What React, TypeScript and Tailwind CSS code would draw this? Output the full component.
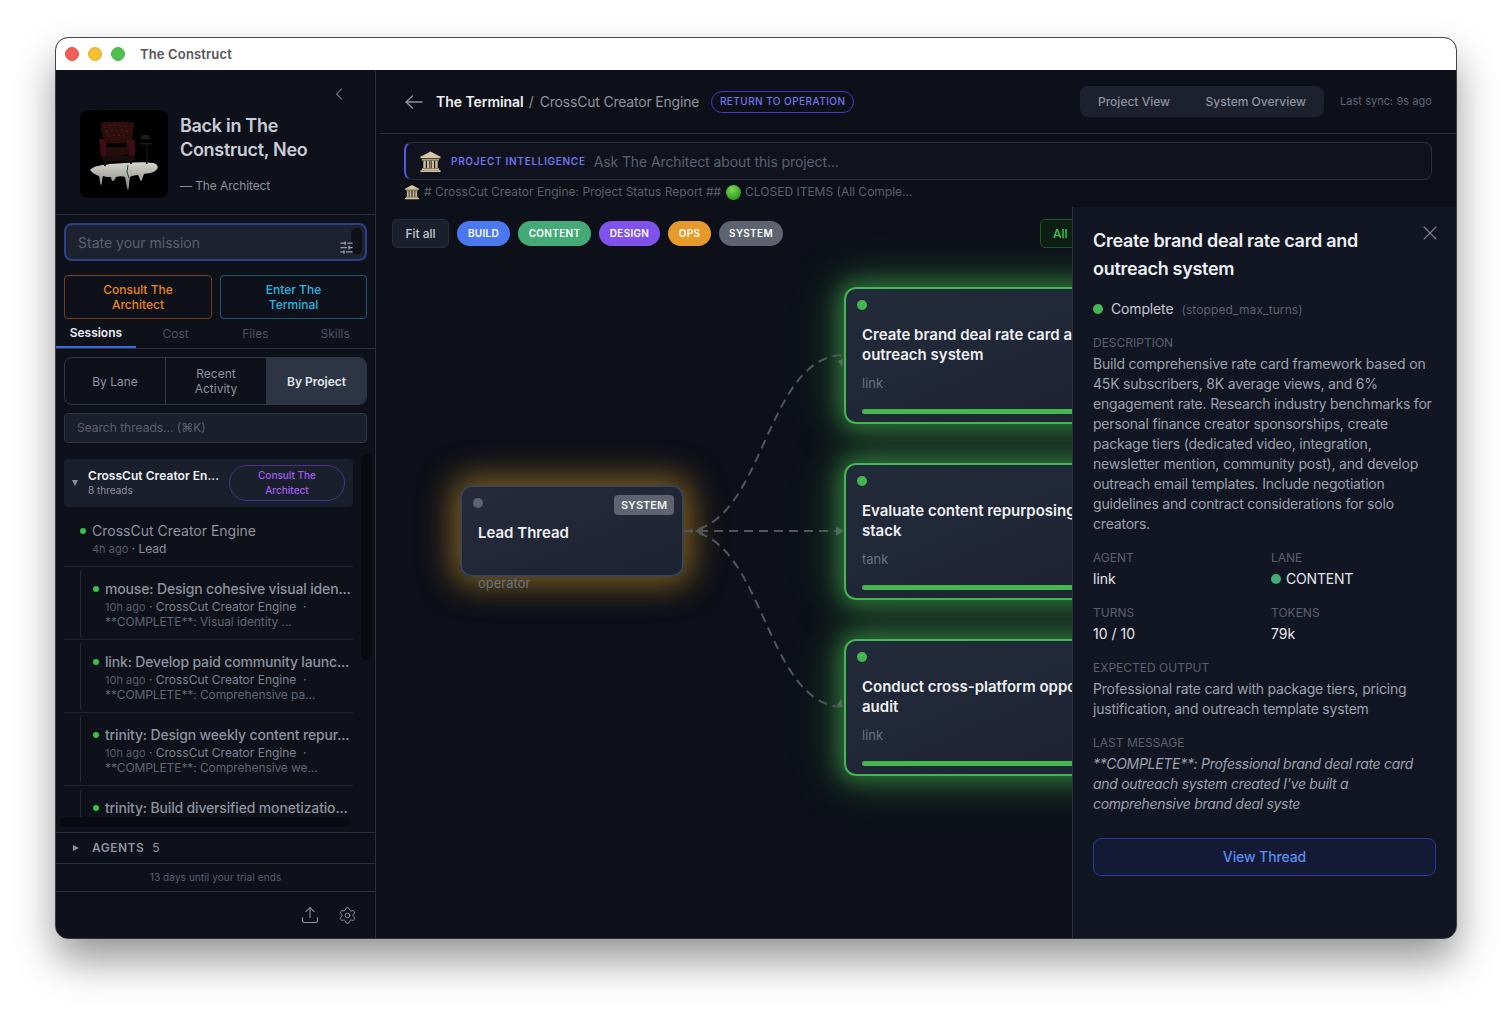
import { ChevronLeft, Settings, SlidersHorizontal, Upload, X } from 'lucide-react'

const threads = [
    { title: 'mouse: Design cohesive visual iden...', note: '**COMPLETE**: Visual identity ...' },
    { title: 'link: Develop paid community launc...', note: '**COMPLETE**: Comprehensive pa...' },
    { title: 'trinity: Design weekly content repur...', note: '**COMPLETE**: Comprehensive we...' },
]

const lanes = [
    { label: 'BUILD', cls: 'bg-[#4a78ee] w-[53px]' },
    { label: 'CONTENT', cls: 'bg-[#44ab78] w-[73px]' },
    { label: 'DESIGN', cls: 'bg-[#8052ec] w-[61px]' },
    { label: 'OPS', cls: 'bg-[#e69a2a] w-[43px]' },
    { label: 'SYSTEM', cls: 'bg-[#5e636f] w-[64px]' },
]

const nodes = [
    { top: 'top-[80px]', lines: ['Create brand deal rate card and', 'outreach system'], agent: 'link' },
    { top: 'top-[256px]', lines: ['Evaluate content repurposing', 'stack'], agent: 'tank' },
    { top: 'top-[432px]', lines: ['Conduct cross-platform opportunity', 'audit'], agent: 'link' },
]

function Temple({ size }: { size: number }) {
    return (
        <svg width={size} height={size} viewBox="0 0 24 24">
            <path d="M12 1.500 22.500 7v1.500h-21V7z" fill="#d3c6a3" />
            <path d="M3 9.500h18V11H3z" fill="#a89a78" />
            <path d="M4.500 11h2.600v8H4.500zM8.300 11h2.200v8H8.300zM13.500 11h2.200v8h-2.200zM16.900 11h2.600v8h-2.600z" fill="#c9bc98" />
            <path d="M10.900 11h2.200v8h-2.200z" fill="#8c8064" />
            <path d="M3 19.300h18v1.500H3zM1.500 21h21v2h-21z" fill="#d3c6a3" />
        </svg>
    )
}

function ChairArt() {
    const tufts = [
        [25, 17], [30, 15], [35, 15], [40, 15], [45, 16],
        [27, 21], [32, 20], [37, 20], [42, 20], [47, 21],
        [29, 26], [34, 25], [39, 25], [44, 26],
    ]
    return (
        <svg width="88" height="88" viewBox="0 0 88 88" className="rounded-lg bg-black shrink-0">
            <defs>
                <filter id="soft"><feGaussianBlur stdDeviation="0.45" /></filter>
                <linearGradient id="melt" x1="0" y1="0" x2="0" y2="1">
                    <stop offset="0" stopColor="#d4d4cd" />
                    <stop offset="1" stopColor="#85857c" />
                </linearGradient>
            </defs>
            <g filter="url(#soft)">
                <path d="M10 60c3-4 12-5 20-6 14-1 32-3 43-1 6 1 6 6 2 8-4 3-8 2-11 3-1 2-2 7-3 7s-2-5-3-6c-4 0-6 1-8 2-1 4-1 13-2 13s-2-9-3-13c-3-1-6-1-9 0-1 2-2 4-3 4s-2-2-2-4c-3 0-5 0-8-1-1 3-1 9-2 9s-1-6-2-9c-3-1-7-3-9-6z" fill="url(#melt)" />
                <path d="M21 13c6-2 25-2 32-.500 2 1 1 4 0 8l-1 12-27 1c-2-6-5-14-4-20z" fill="#2f0d10" />
                <path d="M19 29c3-1 6 0 7 3l1 14-6 1zM46 31c3-2 8-2 9 0v14l-6 2z" fill="#3a1013" />
                <path d="M26 37h23l1 8-24 2z" fill="#280b0d" />
                <path d="M22 46h33l-1 5-31 1z" fill="#190809" />
                <path d="M24 50h2v6h-2zM50 50h2v4h-2zM66 34h1.500v20H66z" fill="#151010" />
                <path d="M60 33h12v1.500H60zM62 25h7l2 4.500h-11z" fill="#1c1a1a" />
                <path d="M48 55l-1 7 2 6" stroke="#1d4a44" strokeWidth="1" fill="none" />
            </g>
            {tufts.map(([x, y]) => (
                <circle key={`${x}-${y}`} cx={x} cy={y} r="0.600" fill="#6d4043" />
            ))}
        </svg>
    )
}

function FlowNode({ top, lines, agent }: { top: string; lines: string[]; agent: string }) {
    return (
        <div className={`absolute left-[468px] ${top} w-[320px] h-[137px] rounded-xl border-2 border-[#46b653] bg-gradient-to-br from-[#222b39] to-[#1e2233] shadow-[0_0_20px_4px_rgba(70,182,83,0.45),0_0_40px_10px_rgba(70,182,83,0.35)] px-4 pt-[11px]`}>
            <div className="w-2.5 h-2.5 rounded-full bg-[#46b653] -ml-[5px]" />
            <div className="mt-[15px] text-[15px] leading-5 font-semibold text-[#eef0f3] whitespace-nowrap">
                {lines[0]}
                <br />
                {lines[1]}
            </div>
            <div className="mt-[8px] text-[13px] leading-5 text-[#6b7280]">{agent}</div>
            <div className="mt-[16px] h-[5px] rounded-full bg-[#46b653]" />
        </div>
    )
}

function Edges() {
    return (
        <svg width="700" height="600" className="absolute left-0 top-0 z-10" fill="none">
            <g stroke="#51555e" strokeWidth="2" strokeDasharray="9 6">
                <path d="M308 324C388 324 388 148 468 148" />
                <path d="M308 324H468" />
                <path d="M308 324C388 324 388 500 468 500" />
            </g>
            <path d="M319 324l8-4.500v9z" fill="#53575d" />
            <path d="M468 324l-8-4.500v9zM467 152l-5 2 4 6zM467 500l-6-2 4-6z" fill="#4c7058" />
        </svg>
    )
}

export default function App() {
    return (
        <div className="w-[1512px] h-[1012px] overflow-hidden bg-white pt-[38px] pl-[56px] font-['Inter',sans-serif]">
            <div className="w-[1400px] h-[900px] rounded-[12px] overflow-hidden flex flex-col bg-[#0d1018] outline outline-1 outline-black/70 shadow-[0_22px_42px_rgba(0,0,0,0.42)]">
                {/* title bar */}
                <div className="h-8 shrink-0 bg-white flex items-center pl-[9px]">
                    <div className="flex gap-[9px]">
                        <span className="w-[14px] h-[14px] rounded-full bg-[#ee5f57] border border-[#e0534b]" />
                        <span className="w-[14px] h-[14px] rounded-full bg-[#f5bf2e] border border-[#e5b028]" />
                        <span className="w-[14px] h-[14px] rounded-full bg-[#4fc04e] border border-[#45b345]" />
                    </div>
                    <span className="ml-[15px] mt-[2px] text-[13px] font-semibold tracking-[0.15px] text-[#555]">The Construct</span>
                </div>

                <div className="flex-1 flex min-h-0">
                    {/* sidebar */}
                    <aside className="w-[320px] shrink-0 border-r border-[#2a2f3b] bg-[#0e111a] flex flex-col">
                        <div className="relative h-[145px] shrink-0 border-b border-[#2a2f3b] pl-6 pt-10 flex gap-3">
                            <ChevronLeft size={20} strokeWidth={1.25} className="absolute left-[273px] top-[14px] text-[#8a8f9a]" />
                            <ChairArt />
                            <div>
                                <div className="text-lg leading-6 font-semibold tracking-[-0.3px] text-[#c9ccd6] mt-1">Back in The<br />Construct, Neo</div>
                                <div className="mt-[16px] text-xs tracking-[-0.1px] text-[#8b909c]">— The Architect</div>
                            </div>
                        </div>

                        <div className="px-2 pt-2 shrink-0">
                            <div className="relative h-[38px] rounded-lg border-2 border-[#2c4185] bg-[#1d2231] flex items-center pl-3 pt-[1px] text-sm text-[#5a606e]">
                                State your mission
                                <span className="absolute right-[3px] top-[3px] w-[11px] h-[26px] rounded-md bg-[#0e1119]" />
                                <SlidersHorizontal size={15} className="absolute right-[11px] bottom-[4px] text-[#9aa0ab] -scale-x-100" />
                            </div>
                            <div className="mt-[14px] flex gap-2">
                                <div className="w-[148px] h-[44px] rounded border border-[#70421c] flex items-center justify-center text-center text-xs leading-[15px] font-medium text-[#ea8419]">Consult The<br />Architect</div>
                                <div className="w-[147px] h-[44px] rounded border border-[#1b5a6e] flex items-center justify-center text-center text-xs leading-[15px] font-medium text-[#2fb6e0]">Enter The<br />Terminal</div>
                            </div>
                        </div>

                        <div className="h-[30px] shrink-0 border-b border-[#2a2f3b] flex text-xs text-[#4d5361]">
                            <div className="w-20 h-[29px] border-b-2 border-[#3f67e0] flex items-center justify-center font-semibold text-[#eceef2]">Sessions</div>
                            <div className="w-20 flex items-center justify-center">Cost</div>
                            <div className="w-20 flex items-center justify-center">Files</div>
                            <div className="w-20 flex items-center justify-center">Skills</div>
                        </div>

                        <div className="px-2 pt-2 shrink-0">
                            <div className="h-[48px] rounded-lg border border-[#303644] overflow-hidden grid grid-cols-[101px_101px_1fr] text-xs text-center leading-[15px] text-[#8d929e]">
                                <div className="flex items-center justify-center border-r border-[#303644]">By Lane</div>
                                <div className="flex items-center justify-center border-r border-[#303644]">Recent<br />Activity</div>
                                <div className="flex items-center justify-center bg-[#2d3443] font-semibold text-[#e4e6eb]">By Project</div>
                            </div>
                            <div className="mt-2 h-[30px] rounded border border-[#303644] bg-[#1a1f2c] flex items-center pl-3 text-xs text-[#5a606e]">Search threads... (⌘K)</div>
                        </div>

                        {/* thread list */}
                        <div className="relative flex-1 min-h-0 mt-4 pl-2 pb-[14px]">
                            <span className="absolute right-[3px] top-[-5px] w-[11px] h-[206px] rounded-md bg-[#090b10]" />
                            <span className="absolute left-[4px] top-[358px] w-[290px] h-[10px] rounded-md bg-[#090b10] z-10" />
                            <div className="h-full overflow-hidden">
                                <div className="w-[289px] h-[48px] rounded bg-[#1a1f2c] flex items-center pl-[8px]">
                                    <span className="w-0 h-0 border-x-[3.5px] border-x-transparent border-t-[6px] border-t-[#8a8f9a]" />
                                    <div className="ml-[9px] w-[137px] pl-[1px]">
                                        <div className="text-xs leading-[15px] font-semibold tracking-[0.05px] text-[#f0f1f4] whitespace-nowrap">CrossCut Creator En...</div>
                                        <div className="text-[10px] leading-[15px] text-[#8d929e]">8 threads</div>
                                    </div>
                                    <div className="ml-[5px] w-[116px] h-[36px] rounded-full border border-[#4c2f8f] flex items-center justify-center text-center text-[10px] leading-[15px] font-medium text-[#a35cf2]">Consult The<br />Architect</div>
                                </div>
                                <div className="w-[289px] h-[60px] border-b border-[#1f2430] pt-[15px] pl-4">
                                    <div className="flex items-center gap-[6px] text-sm leading-[18px] text-[#8d929e]">
                                        <span className="w-[6px] h-[6px] rounded-full bg-[#34c24a]" />
                                        CrossCut Creator Engine
                                    </div>
                                    <div className="pl-3 mt-[1px] text-xs leading-4 text-[#8d929e]"><span className="text-[11px] text-[#565c69]">4h ago</span> · Lead</div>
                                </div>
                                {[...threads, { title: 'trinity: Build diversified monetizatio...', note: '' }].map((t) => (
                                    <div key={t.title} className="w-[289px] h-[73px] border-b border-[#1f2430] pl-4 pt-[2px]">
                                        <div className="h-[69px] rounded-[4px] border-l border-[#272c38] pl-3 pt-[11px]">
                                            <div className="flex items-center gap-[6px] text-sm leading-[18px] font-medium tracking-[-0.16px] text-[#8d929e] whitespace-nowrap">
                                                <span className="w-[6px] h-[6px] rounded-full bg-[#34c24a] shrink-0" />
                                                {t.title}
                                            </div>
                                            {t.note && (
                                                <div className="pl-3 mt-[1px] text-xs text-[#7d828e] whitespace-nowrap">
                                                    <div className="h-[15px] leading-[15px]"><span className="text-[11px] text-[#565c69]">10h ago</span> · CrossCut Creator Engine &nbsp;·</div>
                                                    <div className="h-[15px] leading-[15px] tracking-[-0.09px] text-[#5f6572]">{t.note}</div>
                                                </div>
                                            )}
                                        </div>
                                    </div>
                                ))}
                            </div>
                        </div>

                        <div className="h-[32px] shrink-0 border-y border-[#2a2f3b] flex items-center pl-[17px] text-xs">
                            <span className="w-0 h-0 border-y-[3.5px] border-y-transparent border-l-[6px] border-l-[#8a8f9a]" />
                            <span className="ml-[13px] font-semibold tracking-[0.5px] text-[#8d929e]">AGENTS</span>
                            <span className="ml-2 text-[#8d929e]">5</span>
                        </div>
                        <div className="h-[28px] shrink-0 border-b border-[#2a2f3b] flex items-center justify-center text-[10px] tracking-[0.1px] text-[#5a606e]">13 days until your trial ends</div>
                        <div className="h-[46px] shrink-0 relative text-[#8d929e]">
                            <Upload size={20} strokeWidth={1.25} className="absolute left-[244px] top-[13px]" />
                            <Settings size={19} strokeWidth={1.25} className="absolute left-[282px] top-[14px]" />
                        </div>
                    </aside>

                    {/* main */}
                    <main className="flex-1 min-w-0 flex flex-col">
                        <div className="ml-1 h-[64px] shrink-0 border-b border-[#2a2f3b] flex items-center pl-[25px] pr-6">
                            <svg width="18" height="14" viewBox="0 0 18 14" fill="none" stroke="#8d929e" strokeWidth="1.4" strokeLinecap="round" strokeLinejoin="round" className="shrink-0">
                                <path d="M17 7H1M7.500 1 1 7l6.500 6" />
                            </svg>
                            <span className="ml-[13px] text-sm font-semibold tracking-[-0.05px] text-[#f0f1f4]">The Terminal</span>
                            <span className="ml-[5px] text-sm text-[#8d929e]">/</span>
                            <span className="ml-[6px] text-sm tracking-[-0.2px] text-[#8d929e]">CrossCut Creator Engine</span>
                            <span className="ml-3 h-[22px] w-[143px] rounded-full border border-[#4338ca] flex items-center justify-center text-[10px] font-medium tracking-[0.45px] text-[#6f74ee]">RETURN TO OPERATION</span>
                            <div className="ml-auto h-[31px] w-[244px] rounded-lg bg-[#1c212d] flex items-center justify-between px-[18px] text-xs font-medium text-[#8d929e]">
                                <span>Project View</span>
                                <span>System Overview</span>
                            </div>
                            <span className="ml-4 w-[92px] text-[11px] tracking-[0.05px] text-[#5f6572] whitespace-nowrap">Last sync: 9s ago</span>
                        </div>

                        <div className="h-[73px] shrink-0 pl-7 pr-6 pt-2">
                            <div className="h-[38px] rounded-lg border border-[#2a2f3b] border-l-2 border-l-[#4f5be0] bg-[#10131e] flex items-center pl-[13px]">
                                <Temple size={23} />
                                <span className="ml-[9px] text-[10px] font-semibold tracking-[0.7px] text-[#6f74ee]">PROJECT INTELLIGENCE</span>
                                <span className="ml-2 pt-[1px] text-sm tracking-[-0.1px] text-[#5a606e]">Ask The Architect about this project...</span>
                            </div>
                            <div className="mt-1 flex items-center text-xs leading-[16px] text-[#5a606e]">
                                <Temple size={16} />
                                <span className="ml-[4px]"># CrossCut Creator Engine: Project Status Report ##</span>
                                <span className="ml-[5px] mr-1 w-[15px] h-[15px] rounded-full bg-[radial-gradient(circle_at_40%_30%,#7ed957,#2f9e1f_70%)]" />
                                <span>CLOSED ITEMS (All Comple...</span>
                            </div>
                        </div>

                        <div className="flex-1 min-h-0 flex">
                            {/* canvas */}
                            <div className="relative w-[696px] shrink-0 overflow-hidden">
                                <div className="absolute left-[84px] top-[278px] w-[224px] h-[92px] rounded-xl border-2 border-[#3d4350] bg-gradient-to-br from-[#252b3a] to-[#1e2333] shadow-[0_0_32px_8px_rgba(234,170,40,0.5)] px-4 pt-2">
                                    <div className="flex justify-between">
                                        <span className="w-2.5 h-2.5 rounded-full bg-[#5e636f] mt-[3px] -ml-[5px]" />
                                        <span className="h-5 w-[60px] -mr-2 rounded bg-[#5e636f] flex items-center justify-center text-[11px] font-semibold text-[#eef0f3]">SYSTEM</span>
                                    </div>
                                    <div className="mt-[8px] text-[15px] leading-5 font-semibold text-[#eef0f3]">Lead Thread</div>
                                </div>
                                <div className="absolute left-[102px] top-[367px] text-[13px] text-[#6b7280]">operator</div>
                                {nodes.map((n) => (
                                    <FlowNode key={n.top} {...n} />
                                ))}
                                <Edges />
                                <div className="absolute z-20 left-[16px] top-[12px] flex items-center gap-2">
                                    <div className="h-[29px] w-[57px] rounded-md border border-[#2a2f3b] bg-[#1a1f2c] flex items-center justify-center text-xs font-medium text-[#c5c8d0]">Fit all</div>
                                    {lanes.map((l) => (
                                        <div key={l.label} className={`h-[25px] ${l.cls} rounded-full flex items-center justify-center text-[10px] font-semibold tracking-[0.3px] text-white`}>{l.label}</div>
                                    ))}
                                </div>
                                <div className="absolute z-20 left-[664px] top-[12px] h-[29px] w-[60px] rounded-md border border-[#1f5a2c] bg-[#0d1f14] pl-[12px] flex items-center text-xs font-medium text-[#46c95a]">All</div>
                            </div>

                            {/* detail panel */}
                            <div className="relative z-30 w-[384px] shrink-0 border-l border-[#2a2f3b] bg-[#121622] pl-[20px] pr-[20px] pt-[20px]">
                                <X size={24} strokeWidth={1.1} className="absolute right-[14px] top-[14px] text-[#7d828e]" />
                                <div className="text-lg leading-7 font-semibold tracking-[-0.3px] text-[#eef0f3] w-[300px]">Create brand deal rate card and outreach system</div>
                                <div className="mt-[16px] flex items-center">
                                    <span className="w-2.5 h-2.5 rounded-full bg-[#46b653]" />
                                    <span className="ml-2 text-sm tracking-[-0.15px] text-[#c5c8d0]">Complete</span>
                                    <span className="ml-[8px] mt-[1px] text-xs tracking-[0.1px] text-[#5a606e]">(stopped_max_turns)</span>
                                </div>
                                <div className="mt-[16px] text-xs leading-4 text-[#5a606e]">DESCRIPTION</div>
                                <div className="mt-[3px] text-sm leading-5 tracking-[-0.2px] text-[#9ca1ac]">Build comprehensive rate card framework based on 45K subscribers, 8K average views, and 6% engagement rate. Research industry benchmarks for personal finance creator sponsorships, create package tiers (dedicated video, integration, newsletter mention, community post), and develop outreach email templates. Include negotiation guidelines and contract considerations for solo creators.</div>
                                <div className="mt-[16px] grid grid-cols-2 gap-y-[16px] w-[356px]">
                                    <div>
                                        <div className="text-xs leading-4 text-[#5a606e]">AGENT</div>
                                        <div className="mt-[3px] text-sm leading-5 text-[#e4e6eb]">link</div>
                                    </div>
                                    <div>
                                        <div className="text-xs leading-4 text-[#5a606e]">LANE</div>
                                        <div className="mt-[3px] text-sm leading-5 tracking-[-0.2px] text-[#e4e6eb] flex items-center gap-[5px]"><span className="w-2.5 h-2.5 rounded-full bg-[#44ab78]" />CONTENT</div>
                                    </div>
                                    <div>
                                        <div className="text-xs leading-4 text-[#5a606e]">TURNS</div>
                                        <div className="mt-[3px] text-sm leading-5 text-[#e4e6eb]">10 / 10</div>
                                    </div>
                                    <div>
                                        <div className="text-xs leading-4 text-[#5a606e]">TOKENS</div>
                                        <div className="mt-[3px] text-sm leading-5 text-[#e4e6eb]">79k</div>
                                    </div>
                                </div>
                                <div className="mt-[16px] text-xs leading-4 text-[#5a606e]">EXPECTED OUTPUT</div>
                                <div className="mt-[3px] text-sm leading-5 tracking-[-0.2px] text-[#9ca1ac]">Professional rate card with package tiers, pricing justification, and outreach template system</div>
                                <div className="mt-[16px] text-xs leading-4 text-[#5a606e]">LAST MESSAGE</div>
                                <div className="mt-[3px] text-sm leading-5 italic tracking-[-0.3px] text-[#9ca1ac]">**COMPLETE**: Professional brand deal rate card and outreach system created I've built a comprehensive brand deal syste</div>
                                <div className="mt-[24px] h-[38px] rounded-lg border border-[#253a9c] bg-[#141a36] flex items-center justify-center text-sm font-medium tracking-[-0.1px] text-[#5b8cf0]">View Thread</div>
                            </div>
                        </div>
                    </main>
                </div>
            </div>
        </div>
    )
}
